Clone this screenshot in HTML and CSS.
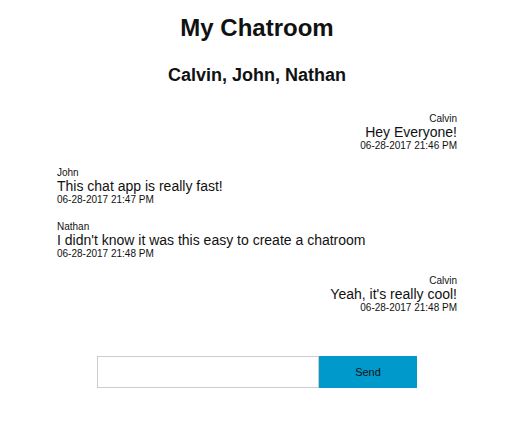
FILE: index.html
```html
<!DOCTYPE html>
<html>
<head>
<meta charset="utf-8">
<link rel="stylesheet" href="styles.css">
</head>
<body>
<div class="page">
  <h1 class="title">My Chatroom</h1>
  <h2 class="members">Calvin, John, Nathan</h2>
  <div class="messages">
    <div class="msg mine">
      <div class="name">Calvin</div>
      <div class="text">Hey Everyone!</div>
      <div class="time">06-28-2017 21:46 PM</div>
    </div>
    <div class="msg">
      <div class="name">John</div>
      <div class="text">This chat app is really fast!</div>
      <div class="time">06-28-2017 21:47 PM</div>
    </div>
    <div class="msg">
      <div class="name">Nathan</div>
      <div class="text">I didn't know it was this easy to create a chatroom</div>
      <div class="time">06-28-2017 21:48 PM</div>
    </div>
    <div class="msg mine">
      <div class="name">Calvin</div>
      <div class="text">Yeah, it's really cool!</div>
      <div class="time">06-28-2017 21:48 PM</div>
    </div>
  </div>
  <form class="composer">
    <input class="field" type="text">
    <button class="send" type="button">Send</button>
  </form>
</div>
</body>
</html>
```
FILE: styles.css
```css
html, body {
  margin: 0;
  padding: 0;
  background: #fff;
}
body {
  font-family: "Liberation Sans", Arial, sans-serif;
  color: #111;
}
.page {
  width: 514px;
  display: flex;
  flex-direction: column;
  align-items: center;
}
.title {
  font-size: 24px;
  font-weight: bold;
  margin: 14px 0 0;
  line-height: 28px;
}
.members {
  font-size: 18px;
  font-weight: bold;
  margin: 22px 0 0;
  line-height: 22px;
}
.messages {
  width: 400px;
  margin-top: 27px;
  display: flex;
  flex-direction: column;
  gap: 15px;
}
.msg {
  display: flex;
  flex-direction: column;
  align-items: flex-start;
}
.msg.mine {
  align-items: flex-end;
}
.name {
  font-size: 10px;
  line-height: 12px;
}
.text {
  font-size: 14px;
  line-height: 15px;
}
.time {
  font-size: 10px;
  line-height: 12px;
}
.composer {
  display: flex;
  margin-top: 42px;
}
.field {
  width: 222px;
  height: 32px;
  box-sizing: border-box;
  border: 1px solid #ccc;
  margin: 0;
  padding: 0 6px;
  outline: none;
}
.send {
  width: 98px;
  height: 32px;
  border: none;
  margin: 0;
  background: #0099cc;
  font-family: "Liberation Sans", Arial, sans-serif;
  font-size: 11px;
  color: #111;
}
```
